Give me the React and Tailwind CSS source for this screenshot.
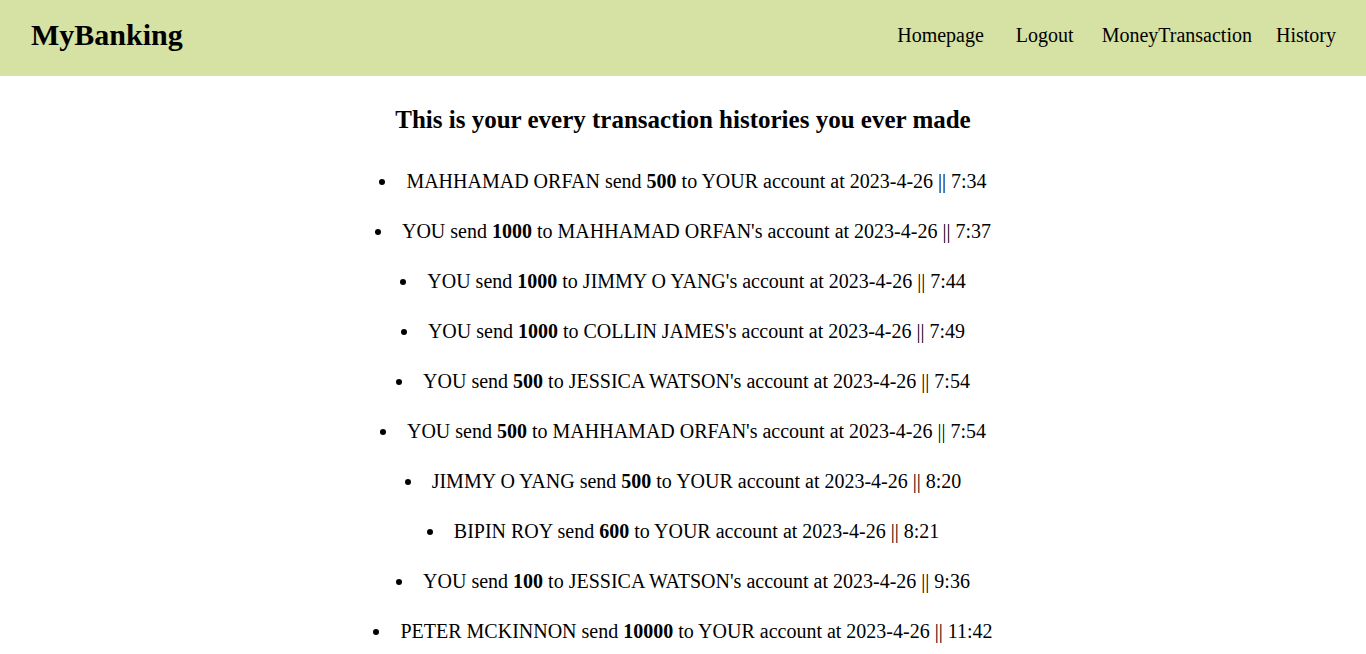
const rows = [
  { from: 'MAHHAMAD ORFAN', amount: '500', to: 'YOUR account', time: '7:34' },
  { from: 'YOU', amount: '1000', to: "MAHHAMAD ORFAN's account", time: '7:37' },
  { from: 'YOU', amount: '1000', to: "JIMMY O YANG's account", time: '7:44' },
  { from: 'YOU', amount: '1000', to: "COLLIN JAMES's account", time: '7:49' },
  { from: 'YOU', amount: '500', to: "JESSICA WATSON's account", time: '7:54' },
  { from: 'YOU', amount: '500', to: "MAHHAMAD ORFAN's account", time: '7:54' },
  { from: 'JIMMY O YANG', amount: '500', to: 'YOUR account', time: '8:20' },
  { from: 'BIPIN ROY', amount: '600', to: 'YOUR account', time: '8:21' },
  { from: 'YOU', amount: '100', to: "JESSICA WATSON's account", time: '9:36' },
  { from: 'PETER MCKINNON', amount: '10000', to: 'YOUR account', time: '11:42' },
]

export default function App() {
  return (
    <div className="min-h-screen bg-white text-black font-['Liberation_Serif',serif]">
      <nav className="h-[76px] bg-[#d6e1a4] flex items-center justify-between pl-[31px] pr-[30px] pb-[6px]">
        <h1 className="text-[30px] font-bold leading-none">MyBanking</h1>
        <div className="flex items-center text-[20px]">
          <a href="#">Homepage</a>
          <a href="#" className="ml-[32px]">Logout</a>
          <a href="#" className="ml-[28px]">MoneyTransaction</a>
          <a href="#" className="ml-[24px]">History</a>
        </div>
      </nav>

      <h2 className="mt-[28px] text-center text-[25px] leading-[32px] font-bold">
        This is your every transaction histories you ever made
      </h2>

      <ul className="mt-[35px] list-disc list-inside text-center text-[20px] leading-[20px]">
        {rows.map((r, i) => (
          <li key={i} className="mb-[30px]">
            {' '}{r.from} send <b>{r.amount}</b> to {r.to} at 2023-4-26 || {r.time}
          </li>
        ))}
      </ul>
    </div>
  )
}
